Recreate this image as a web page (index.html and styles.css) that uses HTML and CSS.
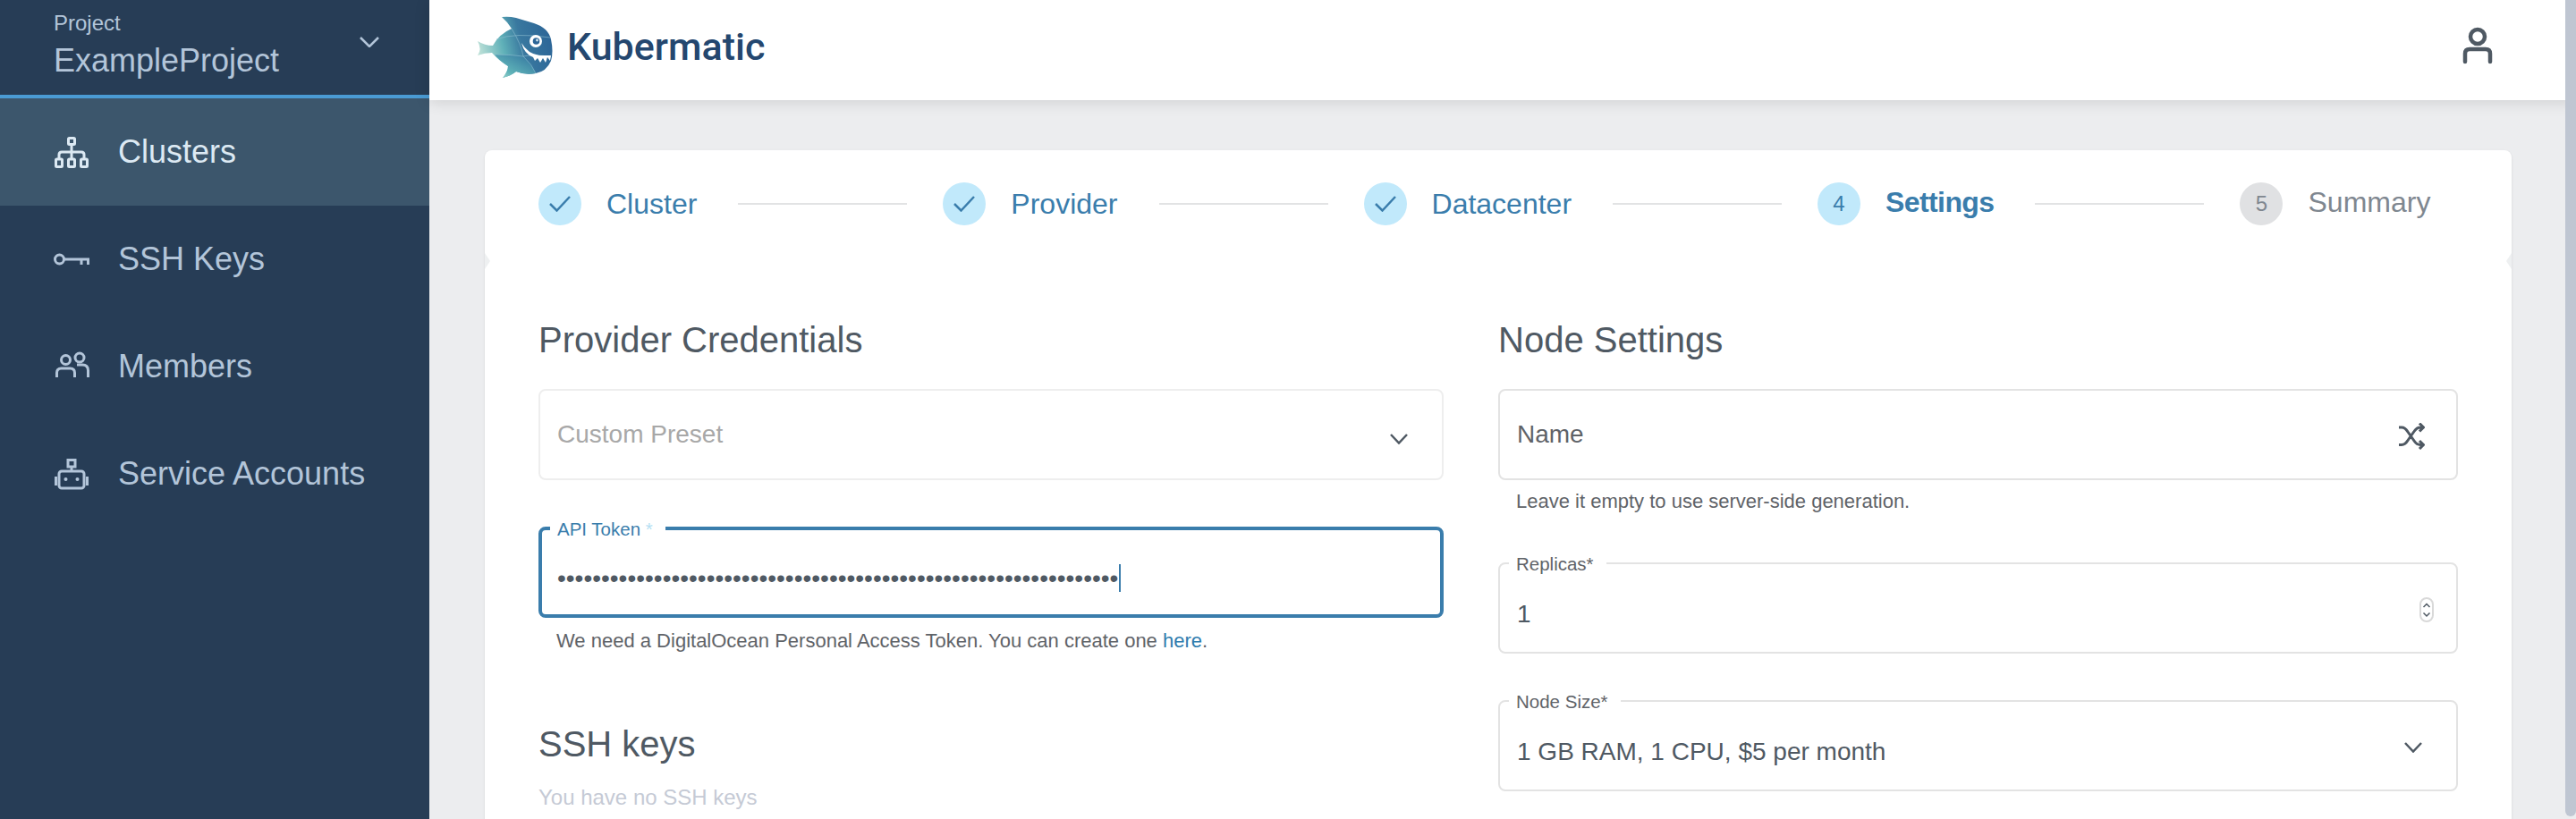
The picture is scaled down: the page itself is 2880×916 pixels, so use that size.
FILE: index.html
```html
<!DOCTYPE html>
<html lang="en">
<head>
  <meta charset="UTF-8">
  <title>Kubermatic</title>
  <link rel="stylesheet" href="styles.css">
</head>
<body>

  <aside class="sidebar">
    <div class="project">
      <div>
        <div class="project-label">Project</div>
        <div class="project-name">ExampleProject</div>
      </div>
      <svg class="project-chevron" width="22" height="12" viewBox="0 0 22 12"><path d="M1 1l10 10L21 1"/></svg>
    </div>

    <nav>
      <a class="nav-item active">
        <svg class="nav-icon" width="40" height="36" viewBox="0 0 40 36">
          <rect x="16.5" y="2.5" width="7" height="7" rx="1"/>
          <path d="M20 9.5V18M6 26v-5q0-3 3-3h22q3 0 3 3v5M20 18v8"/>
          <rect x="2.5" y="26" width="7" height="8.5" rx="1"/>
          <rect x="16.5" y="26" width="7" height="8.5" rx="1"/>
          <rect x="30.5" y="26" width="7" height="8.5" rx="1"/>
        </svg>
        Clusters
      </a>
      <a class="nav-item">
        <svg class="nav-icon" width="40" height="14" viewBox="0 0 40 14">
          <circle cx="6.5" cy="7" r="5"/>
          <path d="M11.500 7H38.500V13M31 7V13"/>
        </svg>
        SSH Keys
      </a>
      <a class="nav-item">
        <svg class="nav-icon" width="40" height="34" viewBox="0 0 40 34">
          <circle cx="13.500" cy="9.500" r="5"/>
          <circle cx="29" cy="7" r="5"/>
          <path d="M3.500 29v-5q0-5 5-5h10q5 0 5 5v5M26 15h6q6.500 0 6.500 6.500V29"/>
        </svg>
        Members
      </a>
      <a class="nav-item">
        <svg class="nav-icon" width="40" height="36" viewBox="0 0 40 36">
          <rect x="16" y="2.500" width="8" height="7.500"/>
          <path d="M20 10v5"/>
          <rect x="6" y="15" width="28" height="19" rx="3"/>
          <path d="M2.500 21v10M37.500 21v10"/>
          <circle class="nav-icon-eye" cx="13.500" cy="24" r="2"/>
          <circle class="nav-icon-eye" cx="26.500" cy="24" r="2"/>
        </svg>
        Service Accounts
      </a>
    </nav>
  </aside>

  <div class="page">
    <header class="topbar">
      <div class="brand">
        <svg class="fish" width="100" height="90" viewBox="0 0 100 90">
          <defs>
            <linearGradient id="fishBody" x1="0" y1="0.6" x2="1" y2="0.4">
              <stop offset="0" stop-color="#c3e4da"/>
              <stop offset="0.35" stop-color="#5fb0b8"/>
              <stop offset="0.6" stop-color="#39789f"/>
              <stop offset="1" stop-color="#2c6597"/>
            </linearGradient>
            <linearGradient id="fishBelly" x1="1" y1="0" x2="0" y2="1">
              <stop offset="0" stop-color="#2f6f9d"/>
              <stop offset="0.7" stop-color="#5fb3b8"/>
              <stop offset="1" stop-color="#b5dfd6"/>
            </linearGradient>
          </defs>
          <path fill="url(#fishBody)" d="M36 9Q44 8 52 10L72 16Q88 21 91 34Q94 48 91 58Q86 70 74 72Q62 74 52 70Q46 75 37 77Q43 70 43 64Q32 57 25 49Q17 49 9 52Q14 45 9 36Q17 41 26 41Q33 28 47 22Q42 14 36 9Z"/>
          <path fill="url(#fishBelly)" d="M43 64Q32 57 28 51Q46 51 60 53Q70 62 74 72Q62 74 52 70Q46 75 37 77Q43 70 43 64Z"/>
          <path fill="none" stroke="#8dbdd0" stroke-width="0.6" d="M47 22Q58 40 60 53Q70 62 74 72M30 34Q50 26 90 32M28 51Q46 51 60 53Q74 50 91 54"/>
          <circle cx="74" cy="36" r="7" fill="#fff"/>
          <circle cx="74.500" cy="36" r="3.800" fill="#2c6597"/>
          <circle cx="75.500" cy="35" r="1.400" fill="#cfe3ee"/>
          <path fill="#fff" d="M58 38Q65 50 78 52L91 52L90 58L87 54L85 60L82 55L79 60L76 55L73 58L71 54Q61 50 58 38Z"/>
        </svg>
        <span class="brand-name">Kubermatic</span>
      </div>
      <svg class="user-icon" width="36" height="44" viewBox="0 0 36 44">
        <circle cx="18" cy="12" r="8"/>
        <path d="M4 40V31q0-5 5-5h18q5 0 5 5v9"/>
      </svg>
    </header>

    <main class="content">
      <section class="card">
        <div class="stepper">
          <div class="step done">
            <span class="step-circle"><svg width="24" height="18" viewBox="0 0 24 18"><path d="M1 9l7.500 7.500L23 1"/></svg></span>
            <span class="step-text">Cluster</span>
          </div>
          <div class="step-line"></div>
          <div class="step done">
            <span class="step-circle"><svg width="24" height="18" viewBox="0 0 24 18"><path d="M1 9l7.500 7.500L23 1"/></svg></span>
            <span class="step-text">Provider</span>
          </div>
          <div class="step-line"></div>
          <div class="step done">
            <span class="step-circle"><svg width="24" height="18" viewBox="0 0 24 18"><path d="M1 9l7.500 7.500L23 1"/></svg></span>
            <span class="step-text">Datacenter</span>
          </div>
          <div class="step-line"></div>
          <div class="step current">
            <span class="step-circle">4</span>
            <span class="step-text">Settings</span>
          </div>
          <div class="step-line"></div>
          <div class="step pending">
            <span class="step-circle">5</span>
            <span class="step-text">Summary</span>
          </div>
        </div>

        <div class="card-body">
          <div class="column">
            <h2>Provider Credentials</h2>
            <div class="field disabled">
              <span class="placeholder">Custom Preset</span>
              <svg class="chevron chevron-preset" width="20" height="12" viewBox="0 0 20 12"><path d="M1 1l9 9.500L19 1"/></svg>
            </div>
            <div class="field focused labelled has-hint">
              <label class="field-label">API Token <span class="required">*</span></label>
              <span class="value dots">••••••••••••••••••••••••••••••••••••••••••••••••••••••••••••••••</span>
            </div>
            <p class="hint">We need a DigitalOcean Personal Access Token. You can create one <a href="#">here</a>.</p>
            <h2 class="ssh-title">SSH keys</h2>
            <p class="empty">You have no SSH keys</p>
          </div>

          <div class="column">
            <h2>Node Settings</h2>
            <div class="field has-hint">
              <span class="name-text">Name</span>
              <svg class="shuffle" width="30" height="30" viewBox="0 0 30 30">
                <path d="M1 5h3q4 0 7 5l7 10q3 4.500 7 4.500h3M1 24.500h3q4 0 7-5l7-10q3-4.500 7-4.500h3M24 0.500l4.500 4.500L24 9.500M24 20l4.500 4.500L24 29"/>
              </svg>
            </div>
            <p class="hint hint-name">Leave it empty to use server-side generation.</p>
            <div class="field labelled replicas">
              <label class="field-label">Replicas*</label>
              <span class="value">1</span>
              <svg class="spinner" width="16" height="28" viewBox="0 0 16 28">
                <rect class="spinner-pill" x="1" y="1" width="14" height="26" rx="7"/>
                <path d="M4.500 11l3.500-3.500 3.500 3.500M4.500 17.500l3.500 3.500 3.500-3.500"/>
              </svg>
            </div>
            <div class="field labelled node-size">
              <label class="field-label">Node Size*</label>
              <span class="value">1 GB RAM, 1 CPU, $5 per month</span>
              <svg class="chevron chevron-node" width="20" height="12" viewBox="0 0 20 12"><path d="M1 1l9 9.500L19 1"/></svg>
            </div>
          </div>
        </div>
      </section>
    </main>
  </div>

  <div class="scroll-thumb"></div>

</body>
</html>
```

FILE: styles.css
```css
* { box-sizing: border-box; }
html, body { height: 100%; }
body {
  margin: 0;
  display: flex;
  height: 916px;
  overflow: hidden;
  font-family: "Liberation Sans", Arial, sans-serif;
  color: #4f5963;
  background-color: #ecedef;
}

/* sidebar */
.sidebar {
  flex: 0 0 480px;
  background-color: #273d56;
  color: #b3c5d9;
}
.project {
  display: flex;
  justify-content: space-between;
  align-items: center;
  height: 110px;
  padding: 0 56px 4px 60px;
  border-bottom: 4px solid #4a9bd4;
}
.project-label { font-size: 24px; line-height: 28px; margin-top: -2px; }
.project-name { font-size: 36px; line-height: 42px; margin-top: 7px; }
.project-chevron { margin-top: -8px; fill: none; stroke: #b3c5d9; stroke-width: 2.500; }

.nav-item {
  display: flex;
  align-items: center;
  gap: 32px;
  height: 120px;
  padding-left: 60px;
  font-size: 36px;
}
.nav-item.active { background-color: #3c566c; color: #dce9f3; }
.nav-icon { flex: none; fill: none; stroke: currentColor; stroke-width: 3; }
.nav-icon-eye { fill: currentColor; stroke: none; }

/* top bar */
.page { flex: 1; min-width: 0; display: flex; flex-direction: column; }
.topbar {
  position: relative;
  display: flex;
  justify-content: space-between;
  align-items: center;
  flex: 0 0 112px;
  padding: 0 92px 0 45px;
  background-color: #fff;
  box-shadow: 0 2px 16px rgba(0, 0, 0, 0.13);
}
.brand { display: flex; align-items: center; gap: 9px; }
.fish { margin-top: -2px; }
.brand-name {
  font-family: Roboto, "Liberation Sans", sans-serif;
  font-size: 43px;
  font-weight: 500;
  color: #24476f;
  margin-top: -8px;
}
.user-icon { fill: none; stroke: #4f5963; stroke-width: 4.500; stroke-linecap: round; margin-top: -10px; }

/* card */
.content { flex: 1; padding: 56px 72px 0 62px; overflow: hidden; }
.card {
  position: relative;
  min-height: 900px;
  background-color: #fff;
  border-radius: 8px;
  box-shadow: 0 1px 3px rgba(0, 0, 0, 0.1);
}
.card::before,
.card::after {
  content: "";
  position: absolute;
  top: 115px;
  border-top: 9px solid transparent;
  border-bottom: 9px solid transparent;
}
.card::before { left: 0; border-left: 6px solid #eef0f1; }
.card::after { right: 0; border-right: 6px solid #eef0f1; }

.stepper {
  display: flex;
  align-items: center;
  height: 124px;
  padding: 0 60px 4px;
}
.step { display: flex; align-items: center; gap: 28px; font-size: 32px; }
.step-circle {
  display: flex;
  align-items: center;
  justify-content: center;
  width: 48px;
  height: 48px;
  border-radius: 50%;
  background-color: #c1e9fb;
  color: #3a7dac;
  font-size: 24px;
}
.step-circle svg { fill: none; stroke: #3a7dac; stroke-width: 2.500; }
.step-text { color: #3a7dac; }
.step-line {
  flex: 0 0 189px;
  height: 2px;
  margin: 0 40px 0 46px;
  background-color: #e2e3e4;
}
.current .step-text { font-weight: bold; letter-spacing: -0.6px; margin-top: -4px; }
.pending .step-circle { background-color: #e0e1e3; color: #7f8790; }
.pending .step-text { color: #7f8790; margin-top: -4px; }

.card-body {
  display: grid;
  grid-template-columns: 1012px 1fr;
  gap: 61px;
  padding: 65px 60px 0 60px;
}
h2 {
  margin: 0 0 32px;
  font-size: 40px;
  font-weight: normal;
  line-height: 46px;
  color: #4f5963;
}

/* form fields */
.field {
  position: relative;
  display: flex;
  justify-content: space-between;
  align-items: center;
  height: 102px;
  margin-bottom: 52px;
  padding: 0 18px 0 19px;
  border: 2px solid #e3e3e3;
  border-radius: 8px;
  font-size: 28px;
}
.field.disabled { border-color: #eeeeee; }
.field.labelled { padding-top: 14px; }
.field.has-hint { margin-bottom: 10px; }
.field.focused { margin-bottom: 12px; border: 4px solid #3a7dac; padding-left: 17px; padding-top: 12px; }
.field-label {
  position: absolute;
  top: -12px;
  left: 10px;
  padding: 0 14px 0 8px;
  background-color: #fff;
  font-size: 20.500px;
  line-height: 24px;
  color: #5f6368;
}
.focused .field-label { top: -13px; left: 9px; color: #3a7dac; }
.required { color: #b5dff3; }
.placeholder { color: #a8a8a8; }
.name-text { color: #5f6368; }
.value { color: #4f5963; }
.dots { line-height: 31px; padding-right: 1px; border-right: 2px solid #3a7dac; }

.chevron { fill: none; stroke: #4f5963; stroke-width: 2.500; }
.chevron-preset { margin: 10px 20px 0 0; }
.chevron-node { margin: -10px 20px 0 0; }
.shuffle { margin-right: 17px; margin-top: 4px; fill: none; stroke: #4f5963; stroke-width: 3; stroke-linejoin: round; }
.spinner { margin: -10px 7px 0 0; fill: none; stroke: #4f5963; stroke-width: 1.500; }
.spinner-pill { stroke: #d9d9d9; stroke-width: 2; }

.hint {
  margin: 0;
  padding-left: 20px;
  font-size: 22px;
  line-height: 28px;
  color: #5f6368;
}
.hint a { color: #2f7cae; text-decoration: none; }
.hint-name { margin-bottom: 54px; }
.ssh-title { margin: 78px 0 23px; }
.empty { margin: 0; font-size: 24px; line-height: 28px; color: #c5cad5; }

/* the scrollbar lies over the right edge of the page */
.scroll-thumb {
  position: absolute;
  top: 0;
  right: 0;
  width: 12px;
  height: 913px;
  background-color: #bfc6d2;
  border-radius: 0 0 6px 6px;
}
```
